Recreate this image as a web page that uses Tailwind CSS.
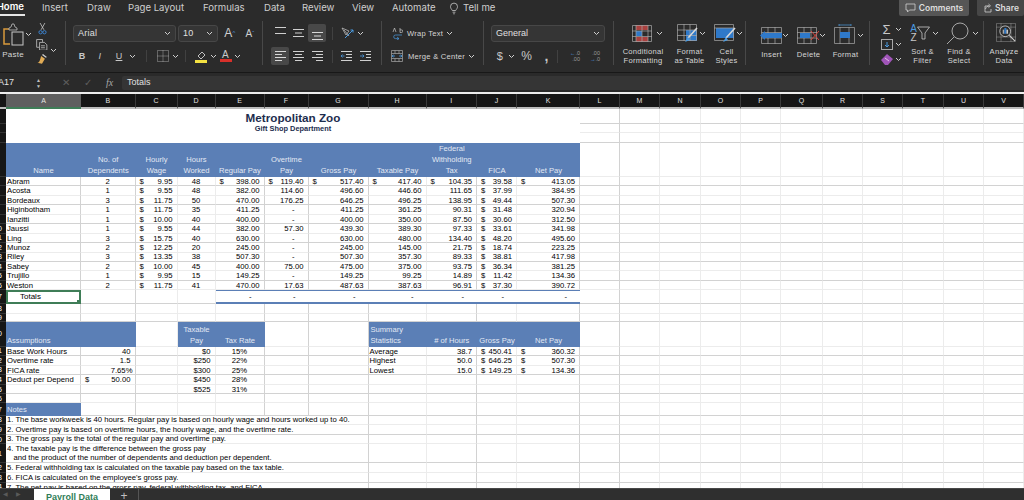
<!DOCTYPE html>
<html lang="en">
<head>
    <meta charset="UTF-8">
    <title>Payroll Data</title>
    <script src="https://cdn.jsdelivr.net/npm/@tailwindcss/browser@4"></script>
</head>
<body class="bg-[#2b2b2b]">

<svg class="hidden">
    <symbol id="chev" viewBox="0 0 7 5"><path d="M1 1l2.5 2.5L6 1" fill="none" stroke="#d0d0d0" stroke-width="1"/></symbol>
</svg>

<div class="w-[1024px] h-[500px] overflow-hidden flex flex-col font-['Liberation_Sans',sans-serif] text-[#d6d6d6] relative">

    <!-- Tabs -->
    <div class="h-[16px] flex items-center text-[9.6px] text-[#cfcfcf] font-['Inter',sans-serif] shrink-0">
        <div class="w-[25px] h-[16px] border-b-2 border-[#e6e6e6] flex items-center justify-end pr-[1px] text-white whitespace-nowrap font-semibold overflow-hidden">Home</div>
        <div class="ml-[17px] w-[45px]">Insert</div>
        <div class="w-[41px]">Draw</div>
        <div class="w-[75px] whitespace-nowrap">Page Layout</div>
        <div class="w-[61px]">Formulas</div>
        <div class="w-[38px]">Data</div>
        <div class="w-[50px]">Review</div>
        <div class="w-[40px]">View</div>
        <div class="w-[57px]">Automate</div>
        <svg class="w-[10px] h-[13px]" viewBox="0 0 10 13" fill="none" stroke="#c8c8c8" stroke-width="0.8"><path d="M3.3 8.5C2.5 7 1.5 6.3 1.5 4.6a3.5 3.5 0 0 1 7 0C8.5 6.3 7.5 7 6.7 8.5zM3.6 10.2h2.8M4.2 11.8h1.6"/></svg>
        <div class="ml-[4px] whitespace-nowrap">Tell me</div>
        <div class="ml-auto flex h-[16px]">
            <div class="w-[70px] bg-[#565656] rounded-b-[2px] flex items-center justify-center gap-[3px] text-[8.5px] font-semibold text-[#dedede]">
                <svg class="w-[11px] h-[10px]" viewBox="0 0 11 10" fill="none" stroke="#cfcfcf" stroke-width="0.8"><path d="M1 1h9v6H4.5L2.5 9V7H1z"/></svg>Comments
            </div>
            <div class="w-[47px] ml-[8px] bg-[#474747] rounded-b-[2px] flex items-center justify-center gap-[3px] text-[8.5px] font-semibold text-[#dedede]">
                <svg class="w-[10px] h-[10px]" viewBox="0 0 10 10" fill="none" stroke="#cfcfcf" stroke-width="0.8"><path d="M7 3H3v6h6V6M3.5 6C4 4 5.5 2.8 7.5 2.8M6.5 1l2 1.8-2 1.8"/></svg>Share
            </div>
        </div>
    </div>

    <!-- Ribbon -->
    <div class="h-[57px] flex text-[7.6px] tracking-[0.25px] leading-[9px] shrink-0 border-b border-[#181818]">

        <!-- Clipboard -->
        <div class="w-[66px] my-[5px] h-[44px] border-r border-[#484848] flex">
            <div class="w-[24px] flex flex-col items-center ml-[1px]">
                <svg class="w-[21px] h-[23px] mt-[2px]" viewBox="0 0 21 23" fill="none"><path d="M6 6H1v15h6" stroke="#d99a3c" stroke-width="1.5"/><path d="M6 5l2-1 1-3h2l1 3 2 1v2H6z" stroke="#bdbdbd" stroke-width="0.8"/><rect x="9" y="9" width="11" height="13" stroke="#c8c8c8"/></svg>
                <div class="mt-[4px] text-[8px]">Paste</div>
            </div>
            <svg class="w-[7px] h-[5px] mt-[11px]"><use href="#chev"/></svg>
            <div class="flex flex-col items-center ml-[2px] w-[16px]">
                <svg class="w-[9px] h-[12px] mt-[2px]" viewBox="0 0 9 12" fill="none"><path d="M2 0l4 7M7 0L3 7" stroke="#c8c8c8" stroke-width="0.8"/><circle cx="2.5" cy="9.5" r="1.7" stroke="#3c83cf"/><circle cx="6.5" cy="9.5" r="1.7" stroke="#3c83cf"/></svg>
                <svg class="w-[12px] h-[12px] mt-[4px]" viewBox="0 0 12 12" fill="none" stroke="#c8c8c8" stroke-width="0.8"><path d="M3 8.5H.5V.5h6V3"/><path d="M3.5 3.5h5l2.5 2.5v5.5H3.5zM5 7h4M5 9h4"/></svg>
                <svg class="w-[12px] h-[12px] mt-[3px]" viewBox="0 0 12 12"><path d="M7 1l4 3-1 1-4-3z" fill="#cfcfcf"/><path d="M5 3l4 3-3 5-5-1c2 0 3-2 4-7z" fill="#e0ab55"/></svg>
            </div>
            <svg class="w-[7px] h-[5px] mt-[27px]"><use href="#chev"/></svg>
        </div>

        <!-- Font -->
        <div class="w-[197px] my-[5px] h-[44px] border-r border-[#484848] flex flex-col pl-[7px]">
            <div class="flex items-center h-[18px] mt-[3px]">
                <div class="w-[103px] h-[17px] bg-[#353535] border border-[#474747] rounded-[3px] flex items-center justify-between px-[4px] text-[9px] text-[#e0e0e0]">Arial<svg class="w-[7px] h-[5px]"><use href="#chev"/></svg></div>
                <div class="w-[40px] h-[17px] ml-[2px] bg-[#353535] border border-[#474747] rounded-[3px] flex items-center justify-between px-[4px] text-[9px] text-[#e0e0e0]">10<svg class="w-[7px] h-[5px]"><use href="#chev"/></svg></div>
                <div class="w-[20px] ml-[2px] text-center text-[12px] text-[#cfcfcf]">A<span class="text-[6px] text-[#4b8fd6] align-top">^</span></div>
                <div class="w-[20px] text-center text-[10px] text-[#cfcfcf]">A<span class="text-[6px] text-[#4b8fd6] align-top">ˇ</span></div>
            </div>
            <div class="flex items-center h-[18px] mt-[5px] text-[9px] text-[#c8c8c8]">
                <div class="w-[18px] ml-[0px] text-center font-bold">B</div>
                <div class="w-[18px] text-center italic">I</div>
                <div class="w-[20px] text-center underline">U</div>
                <svg class="w-[7px] h-[5px]"><use href="#chev"/></svg>
                <div class="w-px h-[12px] bg-[#414141] mx-[10px]"></div>
                <svg class="w-[12px] h-[12px]" viewBox="0 0 12 12" fill="none" stroke="#bdbdbd" stroke-width="0.8" stroke-dasharray="1 1"><path d="M.5.5h11v11H.5zM6 .5v11M.5 6h11"/></svg>
                <svg class="w-[7px] h-[5px] ml-[3px]"><use href="#chev"/></svg>
                <div class="w-px h-[12px] bg-[#414141] ml-[6px] mr-[9px]"></div>
                <svg class="w-[13px] h-[13px]" viewBox="0 0 13 13"><path d="M3 6l4-4 3 3-4 4z" fill="none" stroke="#d0d0d0" stroke-width="0.9"/><rect y="10" width="12" height="3" fill="#f3e142"/></svg>
                <svg class="w-[7px] h-[5px] ml-[2px]"><use href="#chev"/></svg>
                <div class="w-[15px] ml-[1px] flex flex-col items-center leading-[9px] text-[10px]">A<div class="w-[12px] h-[3px] bg-[#d8302a]"></div></div>
                <svg class="w-[7px] h-[5px] ml-[1px]"><use href="#chev"/></svg>
            </div>
        </div>

        <!-- Alignment -->
        <div class="w-[119px] my-[5px] h-[44px] border-r border-[#484848] flex flex-col pl-[8px]">
            <div class="flex items-center h-[18px] mt-[3px]">
                <div class="w-[18px] h-[18px] flex justify-center pt-[3px]"><svg class="w-[11px] h-[8px]" viewBox="0 0 11 8" stroke="#d0d0d0"><path d="M0 .5h11M0 6.5h11"/></svg></div>
                <div class="w-[19px] h-[18px] flex justify-center items-center"><svg class="w-[11px] h-[8px]" viewBox="0 0 11 8" stroke="#d0d0d0"><path d="M0 .5h11M2 4h7M0 7.5h11"/></svg></div>
                <div class="w-[18px] h-[18px] bg-[#484848] rounded-[2px] flex justify-center items-end pb-[2px]"><svg class="w-[11px] h-[8px]" viewBox="0 0 11 8" stroke="#d8d8d8"><path d="M0 .5h11M2 4h7M0 7.5h11"/></svg></div>
                <div class="w-px h-[13px] bg-[#414141] ml-[6px] mr-[8px]"></div>
                <svg class="w-[13px] h-[12px]" viewBox="0 0 13 12" fill="none"><path d="M1 1l7 3-3 4zM3 3l5 6" stroke="#c8c8c8" stroke-width="0.7"/><path d="M4 11l8-8M12 3H9.5M12 3v2.5" stroke="#4b9be0"/></svg>
                <svg class="w-[7px] h-[5px] ml-[3px]"><use href="#chev"/></svg>
            </div>
            <div class="flex items-center h-[18px] mt-[5px]">
                <div class="w-[18px] h-[18px] bg-[#484848] rounded-[2px] flex justify-center items-center"><svg class="w-[11px] h-[10px]" viewBox="0 0 11 10" stroke="#d8d8d8"><path d="M0 .5h11M0 3.5h7M0 6.5h11M0 9.5h7"/></svg></div>
                <div class="w-[19px] flex justify-center"><svg class="w-[11px] h-[10px]" viewBox="0 0 11 10" stroke="#d0d0d0"><path d="M0 .5h11M2 3.5h7M0 6.5h11M2 9.5h7"/></svg></div>
                <div class="w-[18px] flex justify-center"><svg class="w-[11px] h-[10px]" viewBox="0 0 11 10" stroke="#d0d0d0"><path d="M0 .5h11M4 3.5h7M0 6.5h11M4 9.5h7"/></svg></div>
                <div class="w-px h-[13px] bg-[#414141] ml-[6px] mr-[8px]"></div>
                <svg class="w-[11px] h-[10px]" viewBox="0 0 11 10" fill="none"><path d="M0 .5h11M5 3.5h6M5 6.5h6M0 9.5h11" stroke="#d0d0d0"/><path d="M3.5 5H0M1.5 3.5L0 5l1.5 1.5" stroke="#4b9be0" stroke-width="0.8"/></svg>
                <svg class="w-[11px] h-[10px] ml-[8px]" viewBox="0 0 11 10" fill="none"><path d="M0 .5h11M6 3.5h5M6 6.5h5M0 9.5h11" stroke="#d0d0d0"/><path d="M0 5h4M2.5 3.5L4 5 2.5 6.5" stroke="#4b9be0" stroke-width="0.8"/></svg>
            </div>
        </div>

        <!-- Wrap and merge -->
        <div class="w-[102px] my-[5px] h-[44px] border-r border-[#484848] flex flex-col pl-[10px]">
            <div class="flex items-center h-[18px] mt-[3px]">
                <svg class="w-[11px] h-[13px]" viewBox="0 0 11 13" fill="none"><path d="M1 5l1.5-4L4 5M8 1v4.5h1.5a1.3 1.3 0 0 0 0-2.6H8" stroke="#c8c8c8" stroke-width="0.7"/><path d="M10 8H3.5a1.8 1.8 0 0 0 0 3.6H7M5 10l2 1.6-2 1.4" stroke="#4b9be0" stroke-width="0.7"/></svg>
                <div class="ml-[4px] whitespace-nowrap">Wrap Text</div>
                <svg class="w-[7px] h-[5px] ml-[3px]"><use href="#chev"/></svg>
            </div>
            <div class="flex items-center h-[18px] mt-[5px] -ml-[1px]">
                <svg class="w-[12px] h-[12px]" viewBox="0 0 12 12" fill="none"><path d="M.5.5h11v11H.5zM.5 3.5h11M.5 8.5h11M4 .5v3M8 .5v3M4 8.5v3M8 8.5v3" stroke="#a8a8a8" stroke-width="0.7"/><path d="M1 6h3M2.5 4.8L1 6l1.5 1.2M11 6H8M9.5 4.8L11 6 9.5 7.2" stroke="#4b9be0" stroke-width="0.8"/></svg>
                <div class="ml-[5px] whitespace-nowrap">Merge &amp; Center</div>
                <svg class="w-[7px] h-[5px] ml-[3px]"><use href="#chev"/></svg>
            </div>
        </div>

        <!-- Number -->
        <div class="w-[130px] my-[5px] h-[44px] border-r border-[#484848] flex flex-col pl-[7px]">
            <div class="flex items-center h-[18px] mt-[3px]">
                <div class="w-[114px] h-[17px] bg-[#353535] border border-[#474747] rounded-[3px] flex items-center justify-between px-[4px] text-[9px] tracking-normal text-[#e0e0e0]">General<svg class="w-[7px] h-[5px]"><use href="#chev"/></svg></div>
            </div>
            <div class="flex items-center h-[18px] mt-[5px] text-[#c8c8c8]">
                <div class="ml-[4px] w-[10px] text-center text-[11px]">$</div>
                <svg class="w-[7px] h-[5px] ml-[3px]"><use href="#chev"/></svg>
                <div class="w-[19px] ml-[2px] text-center text-[12px] tracking-normal">%</div>
                <div class="w-[11px] ml-[5px] text-center text-[14px] font-bold leading-[10px]">,</div>
                <div class="w-px h-[13px] bg-[#414141] ml-[5px] mr-[8px]"></div>
                <div class="w-[14px] text-[5.5px] leading-[6px] text-[#9a9a9a] tracking-normal text-right"><span class="text-[#4b9be0]">←</span>.0<br>.00</div>
                <div class="w-[14px] ml-[6px] text-[5.5px] leading-[6px] text-[#9a9a9a] tracking-normal text-right">.00<br><span class="text-[#4b9be0]">→</span>.0</div>
            </div>
        </div>

        <!-- Styles -->
        <div class="w-[132px] my-[5px] h-[44px] border-r border-[#484848] flex text-center">
            <div class="w-[57px] flex flex-col items-center pl-[1px]">
                <div class="flex items-center h-[28px] mb-[2px] ml-[9px]">
                    <svg class="w-[20px] h-[17px]" viewBox="0 0 20 17"><rect x="4" width="12" height="5" fill="#a9413f"/><rect x="4" y="12" width="12" height="5" fill="#a9413f"/><rect x="4" y="6" width="6" height="5" fill="#2f79c9"/><path d="M.5.5h19v16H.5zM4 0v17M16 0v17M10 0v17M0 6h20M0 11.5h20" fill="none" stroke="#a8a8a8" stroke-width="0.7"/></svg>
                    <svg class="w-[7px] h-[5px] ml-[4px]"><use href="#chev"/></svg>
                </div>
                <div class="whitespace-nowrap">Conditional<br>Formatting</div>
            </div>
            <div class="w-[37px] flex flex-col items-center">
                <div class="flex items-center h-[28px] mb-[2px] ml-[4px]">
                    <svg class="w-[22px] h-[19px]" viewBox="0 0 22 19"><rect x="9" y="6" width="11" height="11" fill="#2f79c9"/><path d="M.5.5h19v16H.5zM7 0v17M13 0v17M0 6h20M0 11.5h20" fill="none" stroke="#a8a8a8" stroke-width="0.7"/><path d="M20 4l-9 10" stroke="#d8d8d8" stroke-width="1.6"/><path d="M11 13l-3 5 5-2z" fill="#4b9be0"/></svg>
                    <svg class="w-[7px] h-[5px]"><use href="#chev"/></svg>
                </div>
                <div class="whitespace-nowrap">Format<br>as Table</div>
            </div>
            <div class="w-[37px] flex flex-col items-center">
                <div class="flex items-center h-[28px] mb-[2px] ml-[4px]">
                    <svg class="w-[22px] h-[19px]" viewBox="0 0 22 19"><rect x="2" y="4" width="18" height="10" fill="#2f79c9"/><path d="M.5.5h19v16H.5zM0 4h20" fill="none" stroke="#a8a8a8" stroke-width="0.7"/><path d="M21 4l-9 10" stroke="#d8d8d8" stroke-width="1.6"/><path d="M12 13l-3 5 5-2z" fill="#4b9be0"/></svg>
                    <svg class="w-[7px] h-[5px]"><use href="#chev"/></svg>
                </div>
                <div class="whitespace-nowrap">Cell<br>Styles</div>
            </div>
        </div>

        <!-- Cells -->
        <div class="w-[124px] my-[5px] h-[44px] border-r border-[#484848] flex text-center">
            <div class="w-[37px] ml-[7px] flex flex-col items-center">
                <div class="flex items-center h-[28px] mb-[1px] ml-[6px]">
                    <svg class="w-[22px] h-[17px]" viewBox="0 0 22 17"><path d="M1.5.5h20v16h-20zM8 0v17M15 0v17M1.5 5.5h20M1.5 11h20" fill="none" stroke="#a8a8a8" stroke-width="0.7"/><rect x="5" y="6" width="17" height="5" fill="#2f79c9"/><path d="M0 8.5L5 4v9z" fill="#2f79c9"/></svg>
                    <svg class="w-[7px] h-[5px]"><use href="#chev"/></svg>
                </div>
                <div>Insert</div>
            </div>
            <div class="w-[37px] flex flex-col items-center">
                <div class="flex items-center h-[28px] mb-[1px] ml-[6px]">
                    <svg class="w-[22px] h-[17px]" viewBox="0 0 22 17"><path d="M.5.5h19v16H.5zM7 0v17M14 0v17M0 5.5h20M0 11h20" fill="none" stroke="#a8a8a8" stroke-width="0.7"/><rect x="3" y="6" width="10" height="5" fill="#2f79c9"/><path d="M14 4l8 9M22 4l-8 9" stroke="#d8443c"/></svg>
                    <svg class="w-[7px] h-[5px]"><use href="#chev"/></svg>
                </div>
                <div>Delete</div>
            </div>
            <div class="w-[37px] flex flex-col items-center">
                <div class="flex items-center h-[28px] mb-[1px] ml-[6px]">
                    <svg class="w-[22px] h-[22px]" viewBox="0 0 22 22"><path d="M5 1h12M5 0v2M17 0v2" stroke="#4b9be0" stroke-width="0.7"/><path d="M.5 3.5h20v16H.5zM6 3v17M15 3v17" fill="none" stroke="#a8a8a8" stroke-width="0.7"/><rect x="6" y="8" width="10" height="6" fill="#2f79c9"/></svg>
                    <svg class="w-[7px] h-[5px] ml-[1px]"><use href="#chev"/></svg>
                </div>
                <div>Format</div>
            </div>
        </div>

        <!-- Editing -->
        <div class="w-[114px] my-[5px] h-[44px] border-r border-[#484848] flex text-center">
            <div class="w-[34px] pl-[11px] flex flex-col gap-[3px] pt-[2px]">
                <div class="flex items-center h-[12px]"><div class="w-[11px] text-[13px] text-[#c8c8c8] tracking-normal">Σ</div><svg class="w-[7px] h-[5px] ml-[3px]"><use href="#chev"/></svg></div>
                <div class="flex items-center h-[12px]"><svg class="w-[12px] h-[11px]" viewBox="0 0 12 11" fill="none"><rect x=".5" y=".5" width="11" height="10" stroke="#a8a8a8"/><path d="M6 3v5M4 6l2 2 2-2" stroke="#4b9be0"/></svg><svg class="w-[7px] h-[5px] ml-[2px]"><use href="#chev"/></svg></div>
                <div class="flex items-center h-[12px]"><svg class="w-[12px] h-[11px]" viewBox="0 0 12 11"><path d="M0 6l6-6 6 5-5 6H4z" fill="#a055b8"/><path d="M4 4l4 3" stroke="#e3bfe9"/></svg><svg class="w-[7px] h-[5px] ml-[2px]"><use href="#chev"/></svg></div>
            </div>
            <div class="w-[37px] flex flex-col items-center">
                <div class="flex items-center h-[28px] mb-[2px] ml-[4px]">
                    <div class="flex flex-col text-[10px] leading-[9px] tracking-normal"><span class="text-[#4b9be0]">A</span><span class="text-[#c8c8c8]">Z</span></div>
                    <svg class="w-[13px] h-[14px]" viewBox="0 0 13 14" fill="none" stroke="#c8c8c8" stroke-width="0.8"><path d="M.5 1h12L8 7v6H5V7z"/></svg>
                    <svg class="w-[7px] h-[5px] ml-[2px]"><use href="#chev"/></svg>
                </div>
                <div>Sort &amp;<br>Filter</div>
            </div>
            <div class="w-[36px] flex flex-col items-center">
                <div class="flex items-center h-[28px] mb-[2px] ml-[8px]">
                    <svg class="w-[22px] h-[22px]" viewBox="0 0 22 22" fill="none" stroke="#c8c8c8" stroke-width="0.8"><circle cx="13" cy="9" r="8"/><path d="M7 15l-7 7"/></svg>
                    <svg class="w-[7px] h-[5px] ml-[3px]"><use href="#chev"/></svg>
                </div>
                <div>Find &amp;<br>Select</div>
            </div>
        </div>

        <!-- Analyze -->
        <div class="flex-1 my-[5px] h-[44px] flex flex-col items-center text-center">
            <svg class="w-[24px] h-[23px] mt-[2px] ml-[4px]" viewBox="0 0 24 23" fill="none"><path d="M.5.5h23v22H.5zM0 5h24M6 0v23M18 0v23M0 17h24" stroke="#8c8c8c" stroke-width="0.7"/><circle cx="11" cy="10" r="6.5" fill="#2b2b2b" stroke="#d0d0d0"/><rect x="8" y="8" width="2" height="5" fill="#a8a8a8"/><rect x="10" y="6" width="2.5" height="7" fill="#2f79c9"/><rect x="12.5" y="8" width="2" height="5" fill="#c8c8c8"/><path d="M16 15l7 7" stroke="#d0d0d0" stroke-width="1.4"/></svg>
            <div class="mt-[5px] whitespace-nowrap">Analyze<br>Data</div>
        </div>
    </div>

    <!-- Formula bar -->
    <div class="h-[21px] bg-[#2a2a2a] flex items-center shrink-0 text-[#e2e2e2] border-b-2 border-[#ededed]">
        <div class="w-[41px] flex justify-between items-center text-[9px] overflow-hidden">
            <span class="-ml-[2px]">A17</span>
            <span class="flex flex-col text-[5px] leading-[6px] text-[#c0c0c0]"><span>▲</span><span>▼</span></span>
        </div>
        <div class="w-[11px] ml-[21px] text-[10px] text-[#5e5e5e]">✕</div>
        <div class="w-[11px] ml-[11px] text-[10px] text-[#5e5e5e]">✓</div>
        <div class="w-[13px] ml-[11px] text-[10px] italic font-['Liberation_Serif'] text-[#a8a8a8]">fx</div>
        <div class="h-[14px] flex-1 ml-[3px] bg-[#353535] rounded-l-[2px] flex items-center pl-[5px] text-[9px] text-[#e0e0e0]">Totals</div>
    </div>

    <!-- Sheet, cells come from the script below -->
    <div id="sheet" class="flex-1 min-h-0 overflow-hidden bg-white grid grid-cols-[6px_75px_54.5px_42px_38px_49px_44px_60px_58px_50.5px_40px_63px_40px_40px_41px_40px_40px_42px_40px_40px_41px_40px_40px] grid-rows-[15px_15px_9px_10px_34px_repeat(12,9.45px)_13.7px_9.7px_8.3px_24.7px_repeat(5,9.55px)_9px_12.4px_9.3px_9.7px_9.6px_19px_10px_9.4px_9.3px] text-[7.7px] leading-none text-black font-['Liberation_Sans',sans-serif]"></div>

    <!-- Sheet tabs -->
    <div class="h-[12px] shrink-0 bg-[#2f2f2f] flex items-start border-t border-[#484848] overflow-hidden">
        <div class="w-[34px] flex items-center gap-[8px] pl-[3px] pt-[1px] text-[6px] text-[#5a5a5a]"><span>◀</span><span>▶</span></div>
        <div class="w-[76px] h-[12px] bg-white text-[#2f7d57] font-bold text-[9px] text-center leading-[16px]">Payroll Data</div>
        <div class="w-[29px] h-[12px] border-r border-[#555] text-center text-[#c0c0c0] text-[12px] leading-[14px]">+</div>
    </div>
</div>

<script>
    const faintV = 'border-r-[#ececec]', strongV = 'border-r-[#d2d2d2]';
    // which right edges read as the darker gridlines, A to V
    const colEdge = [strongV, strongV, faintV, faintV, strongV, strongV, strongV, faintV, strongV, faintV, strongV, strongV, faintV, faintV, faintV, faintV, faintV, faintV, faintV, faintV, faintV, faintV];
    const letters = 'ABCDEFGHIJKLMNOPQRSTUV'.split('');
    const spanClass = {2: 'col-span-2', 7: 'col-span-7', 11: 'col-span-11'};
    const sheet = [];
    let rowIndex = 0;

    // corner and column letters
    sheet.push('<div class="bg-[#161616] border-b-2 border-[#bdbdbd]"></div>');
    letters.forEach((l, i) => {
        const look = i === 0 ? 'bg-[#5f5f5f] border-b-2 border-[#3f7d57]' : 'bg-[#161616] border-b-2 border-[#bdbdbd] border-r border-r-[#3a3a3a]';
        sheet.push(`<div class="${look} text-[#e4e4e4] flex items-center justify-center text-[7px]">${l}</div>`);
    });

    // one sheet row: cells are {t, k, span}; whatever is left up to column V stays empty
    function row(cells) {
        rowIndex++;
        const lineB = rowIndex % 2 ? 'border-b-[#d2d2d2]' : 'border-b-[#ececec]';
        // the header column is cut off by the window, only the end of two digit numbers shows
        sheet.push(`<div class="bg-[#161616] border-b border-[#333] text-white text-[7px] flex items-center justify-end pr-[4px] overflow-hidden">${rowIndex > 9 ? rowIndex : ''}</div>`);
        let col = 0;
        cells.forEach(c => {
            const span = c.span || 1;
            const edge = colEdge[col + span - 1];
            const look = c.bare ? '' : `border-r border-b ${edge} ${lineB}`;
            sheet.push(`<div class="${spanClass[span] || ''} ${look} ${c.k || ''} flex items-center whitespace-nowrap min-w-0">${c.t || ''}</div>`);
            col += span;
        });
        while (col < 22) {
            sheet.push(`<div class="border-r border-b ${colEdge[col]} ${lineB}"></div>`);
            col++;
        }
    }

    const name = t => ({t, k: 'pl-[1px] pt-[1px]'});
    const mid = t => ({t, k: 'justify-center pt-[1px]'});
    const right = t => ({t, k: 'justify-end pr-[4px] pt-[1px]'});
    const money = (v, sign) => {
        if (v === '-') return {t: '-', k: 'justify-end pr-[13px] pt-[1px]'};
        return {t: (sign ? '<span>$</span>' : '') + `<span>${v}</span>`, k: (sign ? 'justify-between pl-[4px]' : 'justify-end') + ' pr-[4px] pt-[1px]'};
    };
    const band = (t, k) => ({t, bare: true, k: 'bg-[#5b7fb6] text-[#e3e9f4] font-[\'Lato\',sans-serif] text-[7.6px] leading-[11px] text-center items-end justify-center pb-[1px] ' + (k || '')});
    const blank = {};

    // title block
    row([{t: 'Metropolitan Zoo', span: 11, bare: true, k: 'justify-center pt-[2px] text-[11.7px] font-bold text-[#1d2d4e]'}]);
    row([{t: 'Gift Shop Department', span: 11, bare: true, k: 'justify-center text-[7.4px] font-bold text-[#1d2d4e]'}]);
    row([{span: 11, bare: true}]);
    row(['Name', 'No. of<br>Dependents', 'Hourly<br>Wage', 'Hours<br>Worked', 'Regular Pay', 'Overtime<br>Pay', 'Gross Pay', 'Taxable Pay', 'Federal<br>Withholding<br>Tax', 'FICA', 'Net Pay'].map(t => band(`<div>${t}</div>`)));

    const pay = [
        ['Abram', 2, '9.95', 48, '398.00', '119.40', '517.40', '417.40', '104.35', '39.58', '413.05'],
        ['Acosta', 1, '9.55', 48, '382.00', '114.60', '496.60', '446.60', '111.65', '37.99', '384.95'],
        ['Bordeaux', 3, '11.75', 50, '470.00', '176.25', '646.25', '496.25', '138.95', '49.44', '507.30'],
        ['Higinbotham', 1, '11.75', 35, '411.25', '-', '411.25', '361.25', '90.31', '31.48', '320.94'],
        ['Ianzitti', 1, '10.00', 40, '400.00', '-', '400.00', '350.00', '87.50', '30.60', '312.50'],
        ['Jaussi', 1, '9.55', 44, '382.00', '57.30', '439.30', '389.30', '97.33', '33.61', '341.98'],
        ['Ling', 3, '15.75', 40, '630.00', '-', '630.00', '480.00', '134.40', '48.20', '495.60'],
        ['Munoz', 2, '12.25', 20, '245.00', '-', '245.00', '145.00', '21.75', '18.74', '223.25'],
        ['Riley', 3, '13.35', 38, '507.30', '-', '507.30', '357.30', '89.33', '38.81', '417.98'],
        ['Sabey', 2, '10.00', 45, '400.00', '75.00', '475.00', '375.00', '93.75', '36.34', '381.25'],
        ['Trujillo', 1, '9.95', 15, '149.25', '-', '149.25', '99.25', '14.89', '11.42', '134.36'],
        ['Weston', 2, '11.75', 41, '470.00', '17.63', '487.63', '387.63', '96.91', '37.30', '390.72'],
    ];
    pay.forEach((p, i) => {
        const first = i === 0;
        row([name(p[0]), mid(p[1]), money(p[2], true), mid(p[3]), money(p[4], first), money(p[5], first), money(p[6], first), money(p[7], first), money(p[8], first), money(p[9], true), money(p[10], first)]);
    });

    // totals
    const totalLook = 'justify-end pr-[13px] border-t border-t-[#5b7fb6] border-b-2 border-b-[#5b7fb6]';
    row([
        {t: 'Totals<div class="absolute right-[-2px] bottom-[-2px] w-[4px] h-[4px] bg-[#3f7d57]"></div>', bare: true, k: 'relative pl-[12px] border-2 border-[#3f7d57] text-[8px]'},
        blank, blank, blank,
        ...['-', '-', '-', '-', '-', '-', '-'].map(t => ({t, bare: true, k: totalLook})),
    ]);
    row([]);
    row([]);

    // assumptions, tax table and summary bands
    row([
        {t: 'Assumptions', span: 2, bare: true, k: 'bg-[#5b7fb6] text-[#e3e9f4] font-[\'Lato\',sans-serif] text-[7.6px] items-end pl-[1px] pb-[2px]'},
        blank, band('<div>Taxable<br>Pay</div>'), band('<div>Tax Rate</div>'), blank, blank,
        band('<div>Summary<br>Statistics</div>', '!justify-start !text-left pl-[2px]'), band('<div># of Hours</div>'), band('<div>Gross Pay</div>'), band('<div>Net Pay</div>'),
    ]);
    const low = [
        ['Base Work Hours', right('40'), '$0', '15%', 'Average', '38.7', '450.41', '360.32'],
        ['Overtime rate', right('1.5'), '$250', '22%', 'Highest', '50.0', '646.25', '507.30'],
        ['FICA rate', {t: '7.65%', k: 'justify-end pr-[2px] pt-[1px]'}, '$300', '25%', 'Lowest', '15.0', '149.25', '134.36'],
        ['Deduct per Depend', money('50.00', true), '$450', '28%', '', '', '', ''],
        ['', blank, '$525', '31%', '', '', '', ''],
    ];
    low.forEach(l => {
        row([
            name(l[0]), l[1], blank, right(l[2]), mid(l[3]), blank, blank, name(l[4]), right(l[5]),
            l[6] ? money(l[6], true) : blank, l[7] ? money(l[7], true) : blank,
        ]);
    });
    row([]);

    // notes
    row([{t: 'Notes', bare: true, k: 'bg-[#5b7fb6] text-[#e3e9f4] font-[\'Lato\',sans-serif] text-[7.6px] pl-[1px]'}]);
    const note = (t, k) => row([{t, span: 7, k: 'pl-[1px] text-[7.7px] ' + (k || '')}]);
    note('1. The base workweek is 40 hours. Regular pay is based on hourly wage and hours worked up to 40.');
    note('2. Overtime pay is based on overtime hours, the hourly wage, and the overtime rate.');
    note('3. The gross pay is the total of the regular pay and overtime pay.');
    note('<div class="leading-[9.6px]">4. The taxable pay is the difference between the gross pay<br>&nbsp;&nbsp;&nbsp;and the product of the number of dependents and deduction per dependent.</div>');
    note('5. Federal withholding tax is calculated on the taxable pay based on the tax table.');
    note('6. FICA is calculated on the employee\'s gross pay.');
    note('7. The net pay is based on the gross pay, federal withholding tax, and FICA.', 'pt-[2px]');

    document.getElementById('sheet').innerHTML = sheet.join('');
</script>
</body>
</html>
